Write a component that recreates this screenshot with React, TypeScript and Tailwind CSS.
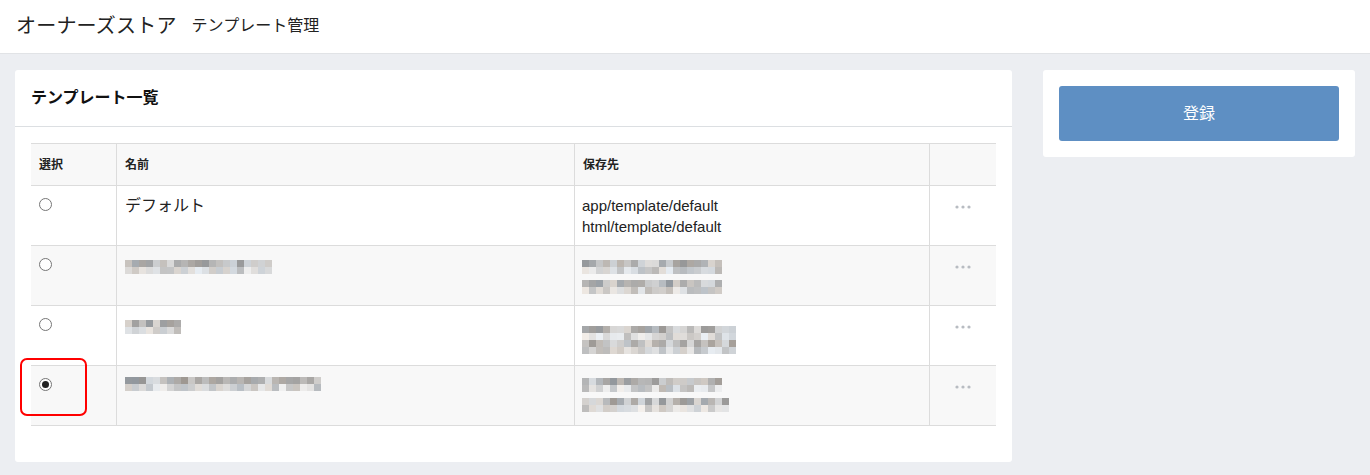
import React from "react";

const FONT = { fontFamily: '"Liberation Sans", "Noto Sans CJK JP", sans-serif' };

function rng(seed: number) {
  let s = seed;
  return () => {
    s = (s * 9301 + 49297) % 233280;
    return s / 233280;
  };
}

function Mosaic({ cols, rows, seed, cell = 7, light = false }: { cols: number; rows: number; seed: number; cell?: number; light?: boolean }) {
  const r = rng(seed);
  const rects: React.ReactElement[] = [];
  for (let y = 0; y < rows; y++) {
    for (let x = 0; x < cols; x++) {
      const base = y % 2 === 0 ? 150 + r() * 70 : 185 + r() * 55;
      const v = Math.round(light ? Math.min(245, base + 15) : base);
      const tint = Math.round((r() - 0.5) * 12);
      rects.push(
        <rect key={`${x}-${y}`} x={x * cell} y={y * cell} width={cell} height={cell} fill={`rgb(${v + tint},${v},${v - tint})`} />
      );
    }
  }
  return (
    <svg width={cols * cell} height={rows * cell} className="block">
      {rects}
    </svg>
  );
}

function Radio({ checked = false }: { checked?: boolean }) {
  return (
    <div className="w-[13px] h-[13px] rounded-full border border-[#767676] bg-white flex items-center justify-center">
      {checked && <div className="w-[7px] h-[7px] rounded-full bg-[#222]" />}
    </div>
  );
}

function Dots() {
  return (
    <svg width="16" height="4" className="block">
      <circle cx="2" cy="2" r="1.6" fill="#b8bcc2" />
      <circle cx="8" cy="2" r="1.6" fill="#b8bcc2" />
      <circle cx="14" cy="2" r="1.6" fill="#b8bcc2" />
    </svg>
  );
}

type Row = {
  name: React.ReactNode;
  path: React.ReactNode;
  checked?: boolean;
  striped?: boolean;
};

export default function App() {
  const rows: Row[] = [
    {
      name: <span className="text-[16px] leading-6 text-[#222]">デフォルト</span>,
      path: (
        <div className="text-[15px] leading-[21px] text-[#222] pt-[1px]">
          <div>app/template/default</div>
          <div>html/template/default</div>
        </div>
      ),
    },
    {
      striped: true,
      name: <div className="pt-[6px]"><Mosaic cols={21} rows={2} seed={11} /></div>,
      path: (
        <div className="pt-[6px] flex flex-col gap-[6px]">
          <Mosaic cols={20} rows={2} seed={21} />
          <Mosaic cols={20} rows={2} seed={31} />
        </div>
      ),
    },
    {
      name: <div className="pt-[6px]"><Mosaic cols={8} rows={2} seed={41} /></div>,
      path: (
        <div className="pt-[12px] flex flex-col gap-0">
          <Mosaic cols={22} rows={2} seed={51} />
          <Mosaic cols={22} rows={2} seed={61} />
        </div>
      ),
    },
    {
      striped: true,
      checked: true,
      name: <div className="pt-[3px]"><Mosaic cols={28} rows={2} seed={71} /></div>,
      path: (
        <div className="pt-[4px] flex flex-col gap-[6px]">
          <Mosaic cols={20} rows={2} seed={81} />
          <Mosaic cols={21} rows={2} seed={91} />
        </div>
      ),
    },
  ];

  return (
    <div className="min-h-[475px] w-[1370px] bg-[#eceef2]" style={FONT}>
      <header className="h-[54px] bg-white border-b border-[#e1e3e6] flex items-center pl-4 pb-[2px]">
        <span className="text-[20px] text-[#222] tracking-[0.2px]">オーナーズストア</span>
        <span className="text-[16px] text-[#222] ml-[15px]">テンプレート管理</span>
      </header>
      <main className="flex items-start pt-4 px-[15px] gap-[31px]">
        <section className="w-[997px] bg-white rounded-[3px] pb-9">
          <div className="h-[57px] border-b border-[#dcdfe2] flex items-center px-4">
            <h2 className="text-[16px] font-bold text-[#111]">テンプレート一覧</h2>
          </div>
          <div className="px-4 pt-4">
            <div className="relative">
              <div className="flex h-[43px] bg-[#f8f8f8] border-t border-b border-[#dcdcdc] text-[12px] font-bold text-[#222]">
                <div className="w-[86px] border-r border-[#dcdcdc] flex items-center pl-2">選択</div>
                <div className="w-[458px] border-r border-[#dcdcdc] flex items-center pl-[8px]">名前</div>
                <div className="w-[355px] border-r border-[#dcdcdc] flex items-center pl-[8px]">保存先</div>
                <div className="flex-1" />
              </div>
              {rows.map((row, i) => (
                <div key={i} className={`flex h-[60px] border-b border-[#dcdcdc] ${row.striped ? "bg-[#f8f8f8]" : "bg-white"}`}>
                  <div className="w-[86px] border-r border-[#dcdcdc] pl-2 pt-[12px]">
                    <Radio checked={row.checked} />
                  </div>
                  <div className="w-[458px] border-r border-[#dcdcdc] pl-[8px] pt-2">{row.name}</div>
                  <div className="w-[355px] border-r border-[#dcdcdc] pl-[7px] pt-2">{row.path}</div>
                  <div className="flex-1 flex justify-center pt-[19px]">
                    <Dots />
                  </div>
                </div>
              ))}
              <div className="absolute left-[-11px] top-[215px] w-[67px] h-[58px] border-2 border-[#f00] rounded-[7px] pointer-events-none" />
            </div>
          </div>
        </section>
        <aside className="w-[312px] bg-white rounded-[3px] p-4">
          <button className="w-full h-[55px] bg-[#5e8fc3] rounded-[3px] text-white text-[16px] flex items-center justify-center">
            登録
          </button>
        </aside>
      </main>
    </div>
  );
}
